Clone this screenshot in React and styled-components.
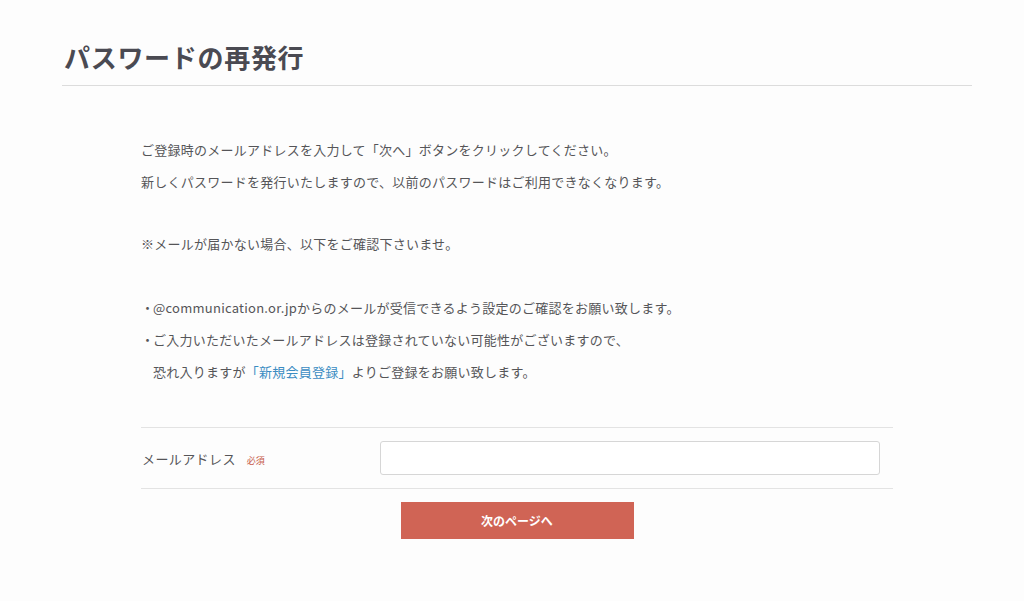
import React from "react";
import styled, { createGlobalStyle } from "styled-components";

const Global = createGlobalStyle`
  html, body { margin: 0; padding: 0; background: #fdfdfd; }
  body {
    font-family: "Noto Sans CJK JP", "Noto Sans", sans-serif;
    color: #555558;
  }
  * { box-sizing: border-box; }
`;

const Page = styled.div`
  width: 1024px;
  min-height: 601px;
  padding: 38px 52px 0 62px;
`;

const Title = styled.h1`
  margin: 0;
  padding: 0 0 9px 2px;
  font-size: 26px;
  line-height: 38px;
  font-weight: 700;
  color: #4a4a52;
  letter-spacing: 0.7px;
  border-bottom: 1px solid #dcdcdc;
`;

const Content = styled.div`
  width: 752px;
  margin: 48px 0 0 79px;
`;

const Para = styled.p`
  margin: 0 0 ${(p) => p.$gap || 0}px;
  font-size: 13px;
  line-height: 32px;
  letter-spacing: 0.25px;
`;

const List = styled.ul`
  margin: 0;
  padding: 0;
  list-style: none;
`;

const Item = styled.li`
  font-size: 13px;
  line-height: 32px;
  letter-spacing: 0.25px;
  padding-left: 12px;
  text-indent: -12px;
`;

const Dot = styled.span`
  display: inline-block;
  width: 12px;
  text-indent: 0;
`;

const Link = styled.a`
  color: #3b8cc2;
  text-decoration: none;
`;

const Form = styled.div`
  margin-top: 39px;
  border-top: 1px solid #e3e3e3;
  border-bottom: 1px solid #e3e3e3;
  display: grid;
  grid-template-columns: 238px 500px;
  align-items: center;
  padding: 13px 0 13px 1px;
`;

const Label = styled.div`
  font-size: 13px;
  letter-spacing: 0.4px;
  display: flex;
  align-items: baseline;
  gap: 11px;
  color: #555558;
`;

const Required = styled.span`
  font-size: 9px;
  letter-spacing: 0;
  color: #c65a48;
`;

const Input = styled.input`
  width: 500px;
  height: 34px;
  border: 1px solid #d6d6d6;
  border-radius: 3px;
  background: #fff;
  outline: none;
`;

const Actions = styled.div`
  display: flex;
  justify-content: center;
  padding-top: 13px;
`;

const Button = styled.button`
  width: 233px;
  height: 37px;
  border: none;
  background: #d06455;
  color: #fff;
  font-family: inherit;
  font-size: 12px;
  font-weight: 700;
  cursor: pointer;
`;

export default function App() {
  return (
    <>
      <Global />
      <Page>
        <Title>パスワードの再発行</Title>
        <Content>
          <Para>ご登録時のメールアドレスを入力して「次へ」ボタンをクリックしてください。</Para>
          <Para $gap={30}>新しくパスワードを発行いたしますので、以前のパスワードはご利用できなくなります。</Para>
          <Para $gap={32}>※メールが届かない場合、以下をご確認下さいませ。</Para>
          <List>
            <Item><Dot>・</Dot>@communication.or.jpからのメールが受信できるよう設定のご確認をお願い致します。</Item>
            <Item>
              <Dot>・</Dot>ご入力いただいたメールアドレスは登録されていない可能性がございますので、<br />
              恐れ入りますが<Link href="#">「新規会員登録」</Link>よりご登録をお願い致します。
            </Item>
          </List>
          <Form>
            <Label>メールアドレス<Required>必須</Required></Label>
            <Input type="email" />
          </Form>
          <Actions>
            <Button>次のページへ</Button>
          </Actions>
        </Content>
      </Page>
    </>
  );
}
